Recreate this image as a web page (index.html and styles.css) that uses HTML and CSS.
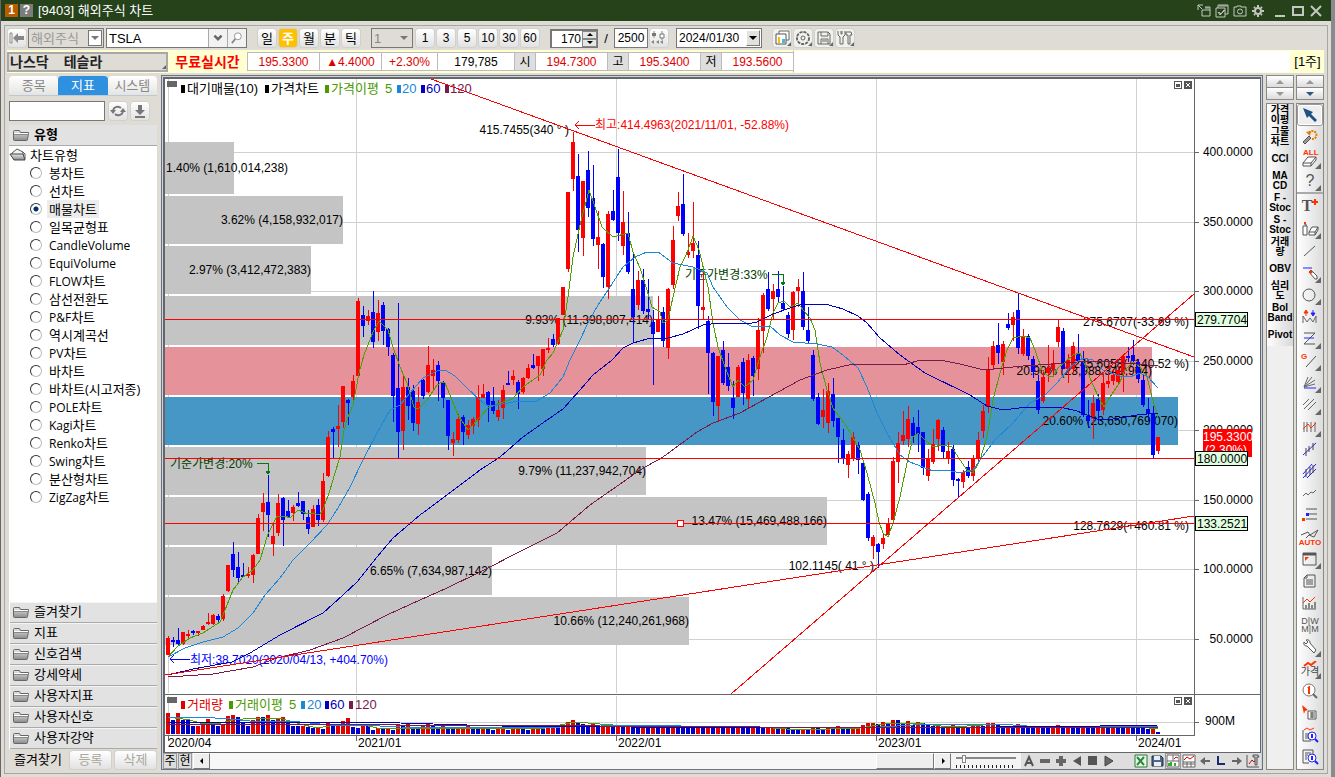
FILE: index.html
```html
<!DOCTYPE html>
<html lang="ko">
<head>
<meta charset="utf-8">
<title>[9403] 해외주식 차트</title>
<link rel="stylesheet" href="styles.css">
</head>
<body>
<svg class="defs" aria-hidden="true">
  <defs>
    <linearGradient id="metal" x1="0" y1="0" x2="0" y2="1"><stop offset="0" stop-color="#e8e8e8"/><stop offset="1" stop-color="#8a8a8a"/></linearGradient>
    <symbol id="folder" viewBox="0 0 18 14"><path d="M1.500 3.500v8q0 1 1 1h12q1 0 1-1l1-7h-8l-1-2h-5q-1 0-1 1z" fill="url(#metal)" stroke="#666"/><path d="M2 5.500h14" stroke="#fff"/><path d="M2 6.500h14" stroke="#888"/></symbol>
    <symbol id="folder-open" viewBox="0 0 18 14"><path d="M3 5l5-4 6 3v3H3z" fill="#f4f4f4" stroke="#555"/><path d="M1 6h13l2 6H5z" fill="url(#metal)" stroke="#444"/><path d="M14 4l2 2v5" fill="none" stroke="#555"/></symbol>
    <symbol id="up" viewBox="0 0 8 4"><path d="M0 4L4 0l4 4z"/></symbol>
    <symbol id="down" viewBox="0 0 8 4"><path d="M0 0h8L4 4z"/></symbol>
  </defs>
</svg>
<div class="window">
  <header class="titlebar">
    <span class="badge orange">1</span><button class="badge grey">?</button>
    <h1>[9403] 해외주식 차트</h1>
    <div class="win-tools">
      <button aria-label="분리"><svg viewBox="0 0 14 14"><path d="M1 6V1h5M1 1l4 4M5 6v6h8V3H8M5 6h8M9 3v2M11 3v2"/></svg></button>
      <button aria-label="복사"><svg viewBox="0 0 14 14"><path d="M1 4h9v9H1zM3 4V1h10v9h-3M3 8l2 3 5-5M4 8l2 2 3-4M4 2h8"/></svg></button>
      <button aria-label="캡처"><svg viewBox="0 0 14 14"><path d="M1 3h3V2h4v1h5v9H1zM7 5a2 2 0 1 1 0 5a2 2 0 1 1 0-5z"/></svg></button>
      <button aria-label="설정"><svg viewBox="0 0 14 14"><circle cx="7" cy="7" r="3" stroke-width="2"/><path d="M7 1v2M7 11v2M1 7h2M11 7h2M3 3l1 1M11 3l-1 1M3 11l1-1M11 11l-1-1" stroke-width="2"/></svg></button>
    </div>
    <div class="win-ctrl">
      <button aria-label="최소화"><svg viewBox="0 0 14 14"><path d="M2 12h10" stroke-width="2"/></svg></button>
      <button aria-label="최대화"><svg viewBox="0 0 14 14"><path d="M2 3h10v8H2z" stroke-width="2"/></svg></button>
      <button aria-label="닫기"><svg viewBox="0 0 14 14"><path d="M2 2l10 10M12 2L2 12" stroke-width="2"/></svg></button>
    </div>
  </header>

  <div class="frame">
    <div class="toolbar">
      <button class="btn back" aria-label="이전"><svg viewBox="0 0 18 18"><path d="M2 4h2v10H2z" fill="#fff" stroke="#888"/><path d="M5 9l5-5v3h6v4h-6v3z" fill="#888"/></svg></button>
      <span class="combo market"><select disabled aria-label="시장"><option>해외주식</option></select><i class="arrow boxed"><svg><use href="#down"/></svg></i></span>
      <span class="symbol"><input type="text" value="TSLA" aria-label="종목"><button aria-label="목록"><svg viewBox="0 0 10 10"><path d="M2 3l3 3 3-3" fill="none" stroke="#666" stroke-width="2"/></svg></button><button aria-label="검색"><svg viewBox="0 0 14 14"><circle cx="8" cy="5" r="4" fill="#fff" stroke="#888"/><path d="M5 8l-4 5" stroke="#888" stroke-width="2"/></svg></button></span>
      <div class="group period"><button class="btn">일</button><button class="btn on">주</button><button class="btn">월</button><button class="btn">분</button><button class="btn">틱</button></div>
      <span class="combo unit"><select disabled aria-label="단위"><option>1</option></select><i class="arrow"><svg><use href="#down"/></svg></i></span>
      <div class="group mins"><button class="btn">1</button><button class="btn">3</button><button class="btn">5</button><button class="btn">10</button><button class="btn">30</button><button class="btn">60</button></div>
      <span class="spin"><input type="text" value="170" aria-label="표시 개수"><span><button aria-label="증가"><svg><use href="#up"/></svg></button><button aria-label="감소"><svg><use href="#down"/></svg></button></span></span>
      <span class="slash">/</span>
      <input class="total" type="text" value="2500" aria-label="전체 개수">
      <button class="btn candle-btn" aria-label="연속조회"><svg viewBox="0 0 18 18"><path d="M4 2v7M12 2v9" stroke="#888"/><path d="M2 4h4v3H2z" fill="#777"/><path d="M10 5h4v4h-4z" fill="#fff" stroke="#777"/><path d="M4 11l-3 2 3 2zM9 11l-3 2 3 2zM13 11l-3 2 3 2" fill="#888"/></svg></button>
      <span class="combo date"><select aria-label="날짜"><option>2024/01/30</option></select><i class="arrow raised"><svg><use href="#down"/></svg></i></span>
      <div class="group tools">
        <button class="btn more" aria-label="차트"><svg viewBox="0 0 18 18"><path d="M6 5V2h10v9h-3" fill="#fff" stroke="#666"/><path d="M3 5h10v10H3z" fill="#fff" stroke="#555"/><path d="M5 8h2v6H5z" fill="#fb0"/><path d="M9 10h3v4H9z" fill="#4bd"/></svg></button>
        <button class="btn more" aria-label="환경설정"><svg viewBox="0 0 18 18"><circle cx="9" cy="9" r="6" fill="none" stroke="#666" stroke-width="2" stroke-dasharray="3 1"/><circle cx="9" cy="9" r="5" fill="#f0f0ed"/><circle cx="9" cy="9" r="2" fill="none" stroke="#666"/></svg></button>
        <button class="btn more" aria-label="저장"><svg viewBox="0 0 18 18"><path d="M3 3h10l2 2v10H3zM6 3v4h7V3M6 15v-5h7v5M7 12h5" fill="none" stroke="#666"/></svg></button>
        <button class="btn more" aria-label="도구"><svg viewBox="0 0 18 18"><path d="M2 2v4l2 2v7h3V8l2-2V2M5 2v3h1V2M10 3h5l1 3h-2v9h-2V6h-2z" fill="none" stroke="#666"/></svg></button>
      </div>
    </div>

    <div class="quote">
      <button class="name more"><span>나스닥</span><span>테슬라</span></button>
      <strong class="free">무료실시간</strong>
      <span class="cell c1">195.3300</span><span class="cell c2">▲4.4000</span><span class="cell c3">+2.30%</span><span class="cell c4">179,785</span>
      <span class="cell k">시</span><span class="cell c5">194.7300</span><span class="cell k">고</span><span class="cell c5">195.3400</span><span class="cell k">저</span><span class="cell c5">193.5600</span>
      <span class="fill"></span><span class="week">[1주]</span>
    </div>

    <div class="work">
      <aside class="side">
        <nav class="tabs"><button>종목</button><button class="on">지표</button><button>시스템</button></nav>
        <div class="find"><input type="text" aria-label="지표 검색"><button class="btn" aria-label="새로고침"><svg viewBox="0 0 18 18"><path d="M4 8a5 5 0 0 1 8-2M14 10a5 5 0 0 1-8 2" fill="none" stroke="#777" stroke-width="2"/><path d="M1 8h6l-3 4zM11 10h6l-3-4z" fill="#777"/></svg></button><button class="btn" aria-label="내려받기"><svg viewBox="0 0 18 18"><path d="M7 3h4v5h3l-5 5-5-5h3z" fill="#777"/><path d="M4 15h10" stroke="#777" stroke-width="2"/></svg></button></div>
        <h2 class="head"><svg><use href="#folder"/></svg>유형</h2>
        <div class="tree">
          <p><svg><use href="#folder-open"/></svg>차트유형</p>
          <label><input type="radio" name="t"><span>봉차트</span></label>
          <label><input type="radio" name="t"><span>선차트</span></label>
          <label><input type="radio" name="t" checked><span>매물차트</span></label>
          <label><input type="radio" name="t"><span>일목균형표</span></label>
          <label><input type="radio" name="t"><span><b>CandleVolume</b></span></label>
          <label><input type="radio" name="t"><span><b>EquiVolume</b></span></label>
          <label><input type="radio" name="t"><span><b>FLOW</b>차트</span></label>
          <label><input type="radio" name="t"><span>삼선전환도</span></label>
          <label><input type="radio" name="t"><span><b>P&amp;F</b>차트</span></label>
          <label><input type="radio" name="t"><span>역시계곡선</span></label>
          <label><input type="radio" name="t"><span><b>PV</b>차트</span></label>
          <label><input type="radio" name="t"><span>바차트</span></label>
          <label><input type="radio" name="t"><span>바차트(시고저종)</span></label>
          <label><input type="radio" name="t"><span><b>POLE</b>차트</span></label>
          <label><input type="radio" name="t"><span><b>Kagi</b>차트</span></label>
          <label><input type="radio" name="t"><span><b>Renko</b>차트</span></label>
          <label><input type="radio" name="t"><span><b>Swing</b>차트</span></label>
          <label><input type="radio" name="t"><span>분산형차트</span></label>
          <label><input type="radio" name="t"><span><b>ZigZag</b>차트</span></label>
        </div>
        <div class="acc">
          <button><svg><use href="#folder"/></svg>즐겨찾기</button>
          <button><svg><use href="#folder"/></svg>지표</button>
          <button><svg><use href="#folder"/></svg>신호검색</button>
          <button><svg><use href="#folder"/></svg>강세약세</button>
          <button><svg><use href="#folder"/></svg>사용자지표</button>
          <button><svg><use href="#folder"/></svg>사용자신호</button>
          <button><svg><use href="#folder"/></svg>사용자강약</button>
        </div>
        <div class="fav"><span>즐겨찾기</span><button class="btn" disabled>등록</button><button class="btn" disabled>삭제</button></div>
      </aside>

      <main class="chart">
        <div class="canvas">
          <svg id="plot" viewBox="165 79 1095 673" preserveAspectRatio="xMinYMin meet">
            <g id="grid" class="grid"></g>
            <g class="profile">
              <path d="M165 142h69v52h-69zM165 196h178v48H165zM165 246h146v48H165zM165 296h488v49H165zM165 447h481v48H165zM165 497h662v48H165zM165 547h327v48H165zM165 597h524v48H165z" fill="#c4c4c4"/>
              <path d="M165 347h987v48H165z" fill="#e5929a"/>
              <path d="M165 397h1013v48H165z" fill="#4697c5"/>
            </g>
            <g class="num">
              <text x="166" y="172">1.40% (1,610,014,238)</text>
              <g text-anchor="end">
                <text x="343" y="224">3.62% (4,158,932,017)</text>
                <text x="311" y="274">2.97% (3,412,472,383)</text>
                <text x="653" y="324">9.93% (11,398,807,414)</text>
                <text x="1152" y="375">20.90% (23,988,349,904)</text>
                <text x="1178" y="425">20.60% (23,650,769,070)</text>
                <text x="646" y="475">9.79% (11,237,942,704)</text>
                <text x="827" y="525">13.47% (15,469,488,166)</text>
                <text x="492" y="575">6.65% (7,634,987,142)</text>
                <text x="689" y="625">10.66% (12,240,261,968)</text>
                <text x="1189" y="326">275.6707(-33.69 %)</text>
                <text x="1189" y="368">245.6058(+140.52 %)</text>
                <text x="1189" y="530">128.7629(+460.81 %)</text>
                <text x="569" y="134">415.7455(340 ° )</text>
                <text x="874" y="570">102.1145( 41 ° )</text>
              </g>
              <g fill="#004000"><text x="170" y="468">기준가변경:20%</text><text x="685" y="279">기준가변경:33%</text></g>
              <text x="595" y="129" fill="#f00">최고:414.4963(2021/11/01, -52.88%)</text>
              <text x="190" y="664" fill="#00f">최저:38.7020(2020/04/13, +404.70%)</text>
            </g>
            <g id="candles" class="crisp"></g>
            <g fill="none" class="crisp">
              <path d="M257 463h11v8M266 471l2 3 2-3zM772 274h11v8M781 282l2 3 2-3z" stroke="#007a10"/>
              <path d="M595 125h-20M579 121l-4 4 4 4" stroke="#f00"/>
              <path d="M190 659h-20M174 655l-4 4 4 4" stroke="#00f"/>
            </g>
            <g id="averages" class="lines crisp"></g>
            <g stroke="#f00" class="crisp">
              <path d="M165 319h1029v1H165zM165 458h1029v1H165zM165 523h1029v1H165z" stroke="none" fill="#f00"/>
              <path d="M431 79L1194 357M1194 294L731 694M165 675L1194 516" fill="none"/>
              <path d="M677 520h6v6h-6z" fill="#fff"/>
            </g>
            <g id="volume" class="crisp"></g>
            <g id="volavg" class="lines crisp"></g>
            <g class="crisp">
              <path d="M165 694h1095v1H165zM1194 79h1v657h-1zM165 735h1030v1H165z" fill="#666"/>
              <path d="M167 81h10v6h-10zM167 697h10v6h-10z" fill="#666"/>
              <path id="ticks" fill="none" stroke="#666"/>
              <g fill="#fff" stroke="#555"><path d="M1174 81h7v7h-7zM1174 697h7v7h-7z"/><path d="M1184 81h7v7h-7zM1184 697h7v7h-7z" fill="#555"/></g>
              <path d="M1176 84h4v3h-4zM1176 700h4v3h-4z" fill="#555"/>
              <path d="M1186 83l4 4M1190 83l-4 4M1186 699l4 4M1190 699l-4 4" stroke="#fff"/>
            </g>
            <g class="legend">
              <text x="187" y="93">대기매물(10)</text><text x="271" y="93">가격차트</text>
              <text x="331" y="93" fill="#4a9a00">가격이평</text><text x="385" y="93" fill="#4a9a00">5</text>
              <text x="402" y="93" fill="#1b87d8">20</text><text x="426" y="93" fill="#0000c0">60</text><text x="450" y="93" fill="#7a1a4a">120</text>
              <text x="187" y="709" fill="#e00000">거래량</text><text x="235" y="709" fill="#4a9a00">거래이평</text><text x="289" y="709" fill="#4a9a00">5</text>
              <text x="307" y="709" fill="#1b87d8">20</text><text x="330" y="709" fill="#0000c0">60</text><text x="355" y="709" fill="#7a1a4a">120</text>
            </g>
            <g class="crisp">
              <path d="M181 85h4v8h-4zM265 85h4v8h-4z"/><path d="M325 85h4v8h-4zM229 701h4v8h-4z" fill="#4a9a00"/>
              <path d="M397 85h4v8h-4zM301 701h4v8h-4z" fill="#1b87d8"/><path d="M421 85h4v8h-4zM325 701h4v8h-4z" fill="#0000c0"/>
              <path d="M445 85h4v8h-4zM349 701h4v8h-4z" fill="#7a1a4a"/><path d="M181 701h4v8h-4z" fill="#e00000"/>
            </g>
            <g class="num" id="scale"></g>
            <g class="num">
              <text x="1205" y="725">900M</text>
              <text x="168" y="747">2020/04</text><text x="358" y="747">2021/01</text><text x="618" y="747">2022/01</text><text x="878" y="747">2023/01</text><text x="1138" y="747">2024/01</text>
              <path d="M1203 429h49v28h-49z" fill="#f00"/><text x="1203" y="441" fill="#fff">195.3300</text><text x="1205" y="454" fill="#fff">(2.30%)</text>
              <g class="tags crisp"><path d="M1195 312h52v14h-52zM1195 451h52v14h-52zM1195 516h52v14h-52z"/></g>
              <text x="1197" y="324">279.7704</text><text x="1197" y="463">180.0000</text><text x="1197" y="528">133.2521</text>
            </g>
          </svg>
        </div>
        <div class="bottom">
          <button class="flat">주</button><button class="flat">현</button>
          <button class="raise" aria-label="왼쪽"><svg viewBox="0 0 8 8"><path d="M5 1v6L2 4z"/></svg></button><div class="track"><span class="raise thumb"></span></div><button class="raise" aria-label="오른쪽"><svg viewBox="0 0 8 8"><path d="M3 1v6l3-3z"/></svg></button>
          <input type="range" min="0" max="100" value="10" aria-label="확대">
          <div class="icons">
            <button aria-label="A"><svg viewBox="0 0 16 16"><path d="M4 13l4-9 4 9M6 10h4" fill="none" stroke="#555" stroke-width="2"/></svg></button>
            <button aria-label="축소"><svg viewBox="0 0 16 16"><path d="M3 6h10v4H3z" fill="#666"/></svg></button>
            <button aria-label="확대"><svg viewBox="0 0 16 16"><path d="M6 3h4v3h3v4h-3v3H6v-3H3V6h3z" fill="#666"/></svg></button>
            <button aria-label="앞으로"><svg viewBox="0 0 16 16"><path d="M12 3v10L4 8z" fill="#555"/></svg></button>
            <button aria-label="정지"><svg viewBox="0 0 16 16"><path d="M3 3h9v9H3z" fill="#555"/></svg></button>
            <button aria-label="재생"><svg viewBox="0 0 16 16"><path d="M4 3v10l8-5z" fill="#666" stroke="#444"/></svg></button>
          </div>
          <div class="icons end">
            <button aria-label="엑셀"><svg viewBox="0 0 16 16"><path d="M2 2h12v12H2z" fill="#e8f5e8" stroke="#287a35"/><path d="M4 4l7 8M11 4l-7 8" stroke="#2a8a3c" stroke-width="2"/></svg></button>
            <button aria-label="저장"><svg viewBox="0 0 16 16"><path d="M3 3h9l2 2v8H3z" fill="#4b6590" stroke="#233"/><path d="M5 3h6v4H5zM5 9h7v4H5z" fill="#e8eef5"/></svg></button>
            <button class="pressed" aria-label="차트 보기"><svg viewBox="0 0 16 16"><path d="M2 2h12v12H2zM8 2v6M2 8h12" fill="#fff" stroke="#666"/><path d="M9 6l2-2 2 1" stroke="#d00" fill="none"/><path d="M4 13v-3M6 13V9M10 13v-3" stroke="#3a3" stroke-width="2"/></svg></button>
            <button aria-label="표 보기"><svg viewBox="0 0 16 16"><path d="M2 2h12v12H2zM2 9h12M2 11h12M6 9v5M10 9v5" fill="#fff" stroke="#666"/><path d="M3 7l3-3 3 2 4-3" stroke="#d00" fill="none"/></svg></button>
            <button aria-label="이전"><svg viewBox="0 0 16 16"><path d="M3 8l5-4v3h5v2H8v3z" fill="#666"/></svg></button>
            <button aria-label="L"><svg viewBox="0 0 16 16"><path d="M5 3v8h7" fill="none" stroke="#1a2a6a" stroke-width="2"/></svg></button>
            <button aria-label="다음"><svg viewBox="0 0 16 16"><path d="M13 8L8 4v3H3v2h5v3z" fill="#666"/></svg></button>
            <button aria-label="도구"><svg viewBox="0 0 16 16"><path d="M2 2v12h12" stroke="#555" fill="none"/><path d="M4 11l3-4 2 2 3-4" stroke="#d00" fill="none"/><path d="M8 2h5l1 2h-2v8h-2V4H8z" fill="#b8c8d0" stroke="#555"/></svg></button>
          </div>
        </div>
      </main>

      <div class="rail">
        <div class="updown"><button aria-label="위"><svg><use href="#up"/></svg></button><button aria-label="아래"><svg><use href="#down"/></svg></button></div>
        <div class="names">
          <button>가격<br>이평</button><button>그물<br>차트</button><button>CCI</button><button>MA<br>CD</button><button>F -<br>Stoc</button><button>S -<br>Stoc</button><button>거래<br>량</button><button>OBV</button><button>심리<br>도</button><button>Bol<br>Band</button><button>Pivot</button>
        </div>
      </div>
      <div class="rail">
        <div class="updown"><button aria-label="위"><svg><use href="#up"/></svg></button><button class="live" aria-label="아래"><svg><use href="#down"/></svg></button></div>
        <div class="draw">
          <button class="sel" aria-label="선택"><svg viewBox="0 0 20 20"><path d="M3 3l10 4-2 2 6 6-2 2-6-6-2 2z" fill="#1d4f80"/></svg></button>
          <button aria-label="되돌리기"><svg viewBox="0 0 20 20"><path d="M9 6a4 4 0 1 1 3 6" fill="none" stroke="#e87800" stroke-width="2" stroke-dasharray="2 1"/><path d="M6 5l5-1-1 5z" fill="#e87800"/><path d="M3 15l6-6 2 2-6 6z" fill="#999" stroke="#555"/></svg></button>
          <button class="more" aria-label="전체삭제"><svg viewBox="0 0 20 20"><text x="3" y="6" class="red tiny">ALL</text><path d="M3 14l5-6h8l-5 6zM3 14v3h8v-3M11 17l5-6V8" fill="#fff" stroke="#555"/></svg></button>
          <button class="more q" aria-label="도움말">?</button>
          <button class="text" aria-label="문자">T<svg viewBox="0 0 6 6"><path d="M3 0v6M0 3h6" stroke="#f30" stroke-width="2"/></svg></button>
          <button class="more" aria-label="지우개"><svg viewBox="0 0 20 20"><path d="M3 7h4v9H3zM4 5h2v2" fill="#fff" stroke="#555"/><path d="M4 3h2v2H4z" fill="#f30"/><path d="M9 13l3-5h6l-3 5zM9 13v3h6v-3M15 16l3-5V8" fill="#fff" stroke="#555"/></svg></button>
          <button aria-label="추세선"><svg viewBox="0 0 20 20"><path d="M4 15L15 5" stroke="#555"/></svg></button>
          <button class="more" aria-label="수평선"><svg viewBox="0 0 20 20"><path d="M3 5h9" stroke="#22f"/><path d="M9 9l2-2 6 6v3h-2z" fill="#fff" stroke="#555"/><path d="M9 9l2-2 2 2-2 2z" fill="#f30"/></svg></button>
          <button class="more" aria-label="원"><svg viewBox="0 0 20 20"><circle cx="9" cy="10" r="6" fill="none" stroke="#555"/></svg></button>
          <button aria-label="파동"><svg viewBox="0 0 20 20"><path d="M3 16V9l4 6 3-4 3 4 3-6v7" fill="none" stroke="#666"/><path d="M6 9V5M4 6l2-3 2 3z" stroke="#f30" fill="#f30"/><path d="M13 3v4M11 6l2 3 2-3z" stroke="#22f" fill="#22f"/></svg></button>
          <button class="more" aria-label="피보나치"><svg viewBox="0 0 20 20"><path d="M4 4h11L4 15h11" fill="none" stroke="#555"/><path d="M4 9h10" stroke="#22f"/></svg></button>
          <button class="more" aria-label="갠"><svg viewBox="0 0 20 20"><text x="1" y="8" class="red tiny">G</text><path d="M6 16L16 5" stroke="#555"/></svg></button>
          <button class="more" aria-label="팬"><svg viewBox="0 0 20 20"><path d="M4 14L8 4M4 14L12 4M4 14l11-7M4 14l11-3" stroke="#666"/><path d="M4 15h12" stroke="#22f"/></svg></button>
          <button class="more" aria-label="평행선"><svg viewBox="0 0 20 20"><path d="M3 10l6-6M4 14L14 4M8 15l8-8" stroke="#666"/></svg></button>
          <button class="more" aria-label="주기선"><svg viewBox="0 0 20 20"><path d="M4 5v10M7 5v10M11 5v10M15 5v10" stroke="#666"/><path d="M3 12l5-5 3 4 5-5" fill="none" stroke="#f30"/></svg></button>
          <button aria-label="채널"><svg viewBox="0 0 20 20"><path d="M3 16L16 4" stroke="#22f"/><path d="M6 9v8M9 7v6M13 4v7" stroke="#444"/></svg></button>
          <button aria-label="회귀채널"><svg viewBox="0 0 20 20"><path d="M3 13L12 3M3 17L16 3M7 17l9-9" stroke="#22f"/><path d="M6 8v8M10 6v8M13 4v8" stroke="#444"/></svg></button>
          <button aria-label="지그재그"><svg viewBox="0 0 20 20"><path d="M3 13l3-3 2 2 3-3 2 1 3-3" fill="none" stroke="#666"/></svg></button>
          <button aria-label="수평분할"><svg viewBox="0 0 20 20"><path d="M6 4h11M6 9h11M6 14h11" stroke="#555"/><path d="M2 13h3v3H2z" fill="#f30"/><path d="M6 8h3v3H6z" fill="#22f"/></svg></button>
          <button class="auto" aria-label="자동추세"><svg viewBox="0 0 20 10"><path d="M1 7l7-3 2 3 8-5-4 7-5-2-3 3" fill="none" stroke="#555"/></svg>AUTO</button>
          <button class="more" aria-label="창"><svg viewBox="0 0 20 20"><path d="M3 4h13v12H3zM3 6h13" fill="none" stroke="#555"/><path d="M3 5h13" stroke="#555" stroke-width="2"/><path d="M5 8h4l-4 4z" fill="#f30"/></svg></button>
          <button aria-label="문서"><svg viewBox="0 0 20 20"><path d="M7 4h8v12H4V7zM7 4v3H4M6 9h7M6 11h7M6 13h7" fill="none" stroke="#555"/></svg></button>
          <button aria-label="통계"><svg viewBox="0 0 20 20"><path d="M3 4v12h13" fill="none" stroke="#666"/><path d="M6 16v-4M9 16v-6M12 16v-4M15 16V9" stroke="#888" stroke-width="2"/><path d="M3 10l4-4 3 3 5-5" fill="none" stroke="#f30"/></svg></button>
          <button class="dwmm" aria-label="일주월분">D|W<br>M|M</button>
          <button class="more" aria-label="설정"><svg viewBox="0 0 20 20"><path d="M4 5l2 2 2-2-2-2q4-1 4 3l6 7-2 3-7-7q-4 0-3-4z" fill="#fff" stroke="#555"/></svg></button>
          <button class="more price" aria-label="가격"><svg viewBox="0 0 14 6"><path d="M1 5l4-3 3 2 5-4" fill="none" stroke="#f30" stroke-width="2"/></svg>가격</button>
          <button aria-label="확대경"><svg viewBox="0 0 20 20"><circle cx="9" cy="9" r="6" fill="#fff" stroke="#777"/><path d="M13 13l4 4" stroke="#666" stroke-width="2"/><path d="M7 7l2-2h1v8H8V7z" fill="#f30"/></svg></button>
          <button aria-label="데이터"><svg viewBox="0 0 20 20"><path d="M2 2l6 5-3 1-1 3z" fill="#f30"/><path d="M8 8h8v8H8zM10 10h5M10 12h5M10 14h5M12 9v6" fill="#fff" stroke="#555"/></svg></button>
          <button aria-label="차트검색"><svg viewBox="0 0 20 20"><path d="M3 5v11h8M5 9h4M5 11h3M5 13h4" fill="none" stroke="#555"/><path d="M4 5l3-2 3 2 4-2" fill="none" stroke="#f30"/><circle cx="12" cy="11" r="4" fill="#fff" stroke="#22f"/><path d="M12 9v4M15 14l3 3" stroke="#22f" stroke-width="2"/></svg></button>
          <button aria-label="문서검색"><svg viewBox="0 0 20 20"><path d="M9 16H3V3h10v4M5 6h6M5 8h3M5 10h2M5 12h2" fill="none" stroke="#555"/><circle cx="12" cy="11" r="4" fill="#fff" stroke="#22f"/><path d="M12 9v4M15 14l3 3" stroke="#22f" stroke-width="2"/></svg></button>
        </div>
      </div>
    </div>
  </div>
</div>
<script src="chart.js"></script>
</body>
</html>
```
FILE: styles.css
```css
* { box-sizing: border-box; }
body { margin: 0; font: 13px "Liberation Sans", "Noto Sans CJK KR", sans-serif; color: #000; }
button, input, select { font: inherit; color: inherit; margin: 0; padding: 0; border: 0; background: none; min-width: 0; }
button { display: flex; align-items: center; justify-content: center; line-height: 1; white-space: nowrap; }
svg { display: block; }
.defs { position: absolute; width: 0; height: 0; }

.window { height: 100vh; display: flex; flex-direction: column; background: #dedcd5; border-left: 1px solid #666; border-right: 4px solid #858b8f; }
.titlebar { height: 21px; flex: none; background: #25421a; color: #fff; display: flex; align-items: center; gap: 2px; padding: 0 8px 0 4px; }
.titlebar h1 { font-size: 13px; font-weight: 400; margin: 0 auto 0 3px; line-height: 20px; }
.badge { width: 13px; height: 13px; font-size: 12px; line-height: 13px; font-weight: 700; text-align: center; color: #fff; }
.orange { background: #b85c00; }
.grey { background: #7c7c7c; }
.win-tools, .win-ctrl { display: flex; gap: 4px; margin-left: 6px; }
.titlebar svg { width: 14px; height: 14px; fill: none; stroke: #c4c8c0; }

.frame { flex: 1; min-height: 0; margin: 4px 3px 3px; border: 1px solid #a6a6a6; padding: 0 3px 3px 2px; display: flex; flex-direction: column; }
.toolbar { height: 24px; flex: none; display: flex; align-items: center; padding: 0 2px 0 1px; }
.btn { height: 18px; background: linear-gradient(#fff, #f0f0f0 50%, #e2e2e2); border-radius: 3px; box-shadow: 0 0 0 1px #d0d0cc; position: relative; }
.btn svg { width: 18px; height: 18px; }
.btn.on { background: #ffc000; color: #fff; font-weight: 700; }
.back { width: 18px; margin-right: 2px; }
.combo { position: relative; height: 20px; border: 1px solid #777; }
.combo select { appearance: none; width: 100%; height: 100%; padding-left: 2px; opacity: 1; }
.combo .arrow { position: absolute; right: 1px; top: 1px; bottom: 1px; width: 14px; display: flex; align-items: center; justify-content: center; pointer-events: none; }
.arrow svg { width: 8px; height: 4px; fill: #777; }
.boxed { background: #fff; border: 1px solid #777; }
.raised { background: #e2e2dd; border: 1px solid #999; border-color: #fff #777 #777 #fff; }
.raised svg { fill: #000; }
.market { width: 76px; color: #999; }
.symbol { display: flex; width: 141px; height: 20px; margin-left: 2px; border: 1px solid #777; background: #fff; }
.symbol input { flex: 1; padding-left: 2px; }
.symbol button { width: 19px; border-left: 1px solid #aaa; background: #f2f2f2; }
.symbol svg { width: 12px; height: 12px; }
.group { display: flex; gap: 3px; }
.group .btn { width: 18px; }
.period { margin-left: 11px; }
.unit { width: 42px; margin: 0 3px 0 11px; color: #888; }
.mins { font-size: 12px; }
.spin { display: flex; width: 48px; height: 19px; margin-left: 11px; border: 1px solid #777; border-width: 2px 1px 1px 2px; background: #fff; }
.spin input { flex: 1; text-align: right; font-size: 12px; padding-right: 1px; }
.spin span { width: 15px; display: flex; flex-direction: column; }
.spin button { flex: 1; background: #e6e6e2; border: 1px solid #888; }
.spin svg { width: 6px; height: 3px; }
.slash { width: 16px; text-align: center; }
.total { width: 34px; height: 20px; border: 1px solid #777; background: #fff; text-align: center; font-size: 12px; }
.candle-btn { width: 18px; margin-left: 2px; }
.date { width: 86px; margin: 0 11px 0 8px; background: #fff; font-size: 12px; }
.tools .btn { background: #f0f0ed; }
.more { position: relative; }
.more::after { content: ""; position: absolute; right: 0; bottom: 1px; border: 2px solid #666; border-top-color: transparent; border-left-color: transparent; }

.quote { height: 23px; flex: none; display: flex; align-items: center; background: #ffffd2; font-size: 12px; }
.name { width: 161px; height: 20px; border: 2px solid #a8a8a8; background: #dedcd5; justify-content: flex-start; gap: 15px; padding-left: 1px; font-size: 14px; font-weight: 700; color: #222; }
.free { width: 79px; text-align: center; color: #f00; font-size: 14px; line-height: 20px; }
.cell { height: 19px; line-height: 18px; text-align: center; background: #fff; border: 1px solid #bbb; border-right: 0; color: #d00; }
.c1 { width: 72px; } .c2 { width: 62px; } .c3 { width: 56px; } .c4 { width: 77px; color: #000; } .c5 { width: 72px; }
.k { width: 21px; background: #dedede; color: #000; }
.fill { flex: 1; align-self: stretch; background: #fff; border: 1px solid #ffffd2; border-left: 1px solid #bbb; }
.week { width: 33px; text-align: center; font-size: 13px; line-height: 20px; }

.work { flex: 1; min-height: 0; margin-top: 2px; display: flex; padding-left: 2px; }
.side { width: 148px; flex: none; margin-right: 4px; display: flex; flex-direction: column; }
.tabs { height: 20px; flex: none; display: flex; border-bottom: 1px solid #bcc8d4; margin-top: 1px; }
.tabs button { flex: 1; color: #888; background: linear-gradient(#fff, #e4e4e2); border-radius: 4px 4px 0 0; }
.tabs .on { background: #3090e0; color: #fff; }
.find { height: 29px; flex: none; display: flex; align-items: center; gap: 4px; padding-top: 1px; }
.find input { width: 96px; height: 20px; border: 1px solid #777; background: #fff; }
.find .btn { width: 18px; }
.head { height: 21px; flex: none; margin: 0; display: flex; align-items: center; font-size: 13px; font-weight: 700; background: #e2e2e2; border-bottom: 1px solid #aaa; padding-left: 3px; gap: 4px; line-height: 18px; }
.side p svg, .acc svg, .head svg { width: 18px; height: 14px; flex: none; }
.tree { flex: 1; background: #fff; min-height: 0; overflow: hidden; font-family: "Open Sans", "Noto Sans CJK KR", sans-serif; }
.tree p { margin: 0; height: 18px; display: flex; align-items: center; gap: 3px; line-height: 18px; }
.tree label { height: 18px; display: flex; align-items: center; gap: 5px; padding-left: 21px; line-height: 18px; white-space: nowrap; }
.tree label span { padding: 0 2px; }
.tree b { font-size: 12px; font-weight: 400; }
.tree input { appearance: none; width: 12px; height: 12px; border: 1px solid #333; border-right-color: #bbb; border-bottom-color: #bbb; border-radius: 50%; background: #fff; }
.tree input:checked { background: radial-gradient(circle, #003070 2px, #fff 3px); }
.tree input:checked + span { background: #ececec; }
.acc { flex: none; padding-left: 1px; background: #fff; }
.acc button { width: 100%; height: 21px; justify-content: flex-start; gap: 4px; padding: 0 2px 2px; background: #e2e2e2; border-bottom: 1px solid #aaa; border-top: 1px solid #f4f4f4; }
.fav { height: 21px; flex: none; display: flex; align-items: center; gap: 4px; padding-left: 5px; }
.fav span { width: 52px; line-height: 18px; }
.fav .btn { width: 41px; color: #aaa89c; }

.chart { flex: 1; min-width: 0; border: 1px solid #6a7385; padding: 1px 1px 0; background: #ccd2de; display: flex; flex-direction: column; }
.canvas { flex: 1; min-height: 0; background: #fff; border: 1px solid #666; border-width: 2px 1px 1px 2px; }
.canvas svg { width: 100%; height: 100%; }
.grid { stroke: #d0d0d0; shape-rendering: crispEdges; }
.crisp { shape-rendering: crispEdges; }
.num { font-size: 12px; }
.legend { font-size: 13px; }
.lines { fill: none; }
.tags { fill: #e0ffe0; stroke: #000; }

.bottom { height: 16px; flex: none; display: flex; background: #dedede; }
.flat { width: 14px; margin-right: 1px; background: #ddd; border: 1px solid #999; font-size: 12px; }
.raise { width: 17px; background: #eee; border: 1px solid #fff; border-right-color: #777; border-bottom-color: #777; }
.raise svg { width: 8px; height: 8px; }
.track { flex: 1; display: flex; justify-content: flex-end; background: #f7f7f7; }
.thumb { width: 58px; }
.bottom input { appearance: none; width: 70px; height: 16px; padding: 0 5px; background: repeating-linear-gradient(90deg, #222 0 1px, transparent 1px 4px) 5px 12px / 60px 3px no-repeat, #f4f4f4; }
.bottom input::-webkit-slider-runnable-track { height: 2px; background: #888; margin-bottom: 6px; }
.bottom input::-webkit-slider-thumb { appearance: none; width: 4px; height: 8px; margin-top: -2px; background: #fff; border: 1px solid #888; }
.icons { display: flex; }
.icons.end { margin-left: 16px; }
.icons svg { width: 16px; height: 16px; }
.icons button { width: 16px; }
.pressed { background: #eee; outline: 1px solid #999; outline-offset: -1px; }

.rail { width: 28px; flex: none; margin-left: 3px; display: flex; flex-direction: column; gap: 3px; }
.rail + .rail { margin-left: 2px; }
.updown { height: 25px; flex: none; border: 1px solid #888; display: flex; flex-direction: column; background: #888; gap: 1px; }
.updown button { flex: 1; background: linear-gradient(#fff, #dcdcdc); }
.updown svg { width: 8px; height: 4px; fill: #999; }
.updown .live svg { fill: #34557f; }
.names, .draw { flex: 1; min-height: 0; border: 1px solid #888; background: #efefef; overflow: hidden; }
.names button { width: 100%; height: 22px; font-size: 10px; line-height: 10px; font-weight: 700; background: linear-gradient(90deg, #fff, #d8d8d8); }
.draw { background: linear-gradient(90deg, #fff, #dcdcdc); }
.draw button { width: 100%; height: 22px; }
.draw svg { width: 20px; height: 20px; }
.draw .more::after { right: 2px; border-width: 3px; border-color: transparent #666 #666 transparent; }
.draw .sel { border: 1px solid #999; outline: 1px solid #fff; outline-offset: -2px; border-radius: 3px; background: #eee; }
.draw .q { font-size: 16px; color: #555; }
.draw .text { font: 700 16px/20px "Liberation Serif", serif; color: #555; border-top: 2px solid #aaa; height: 26px; }
.draw .text svg { width: 6px; height: 6px; margin-bottom: 8px; }
.red { fill: #f30; }
.tiny { font: 700 8px "Liberation Sans", sans-serif; }
.draw .dwmm { font-size: 9px; line-height: 8px; color: #555; }
.draw .price { flex-direction: column; font-size: 10px; color: #444; }
.draw .price svg { width: 14px; height: 6px; }
.draw .auto { flex-direction: column; font-size: 8px; font-weight: 700; line-height: 9px; color: #f30; }
.draw .auto svg { width: 20px; height: 10px; }
```
FILE: chart.js
```js
const NS = "http://www.w3.org/2000/svg";
const RISE = "#ff0000", FALL = "#0000ff";

// Weekly candles: direction, high, body top, body bottom, low
const weeks = `R636,638,655,655 B637,640,642,647 B628,640,644,646 R632,632,644,645 R630,634,636,638 B630,631,633,635 R631,631,632,636 R625,626,630,630 R613,622,624,625 R614,615,624,625
B614,616,620,622 R594,596,619,621 R565,565,591,592 B542,554,570,577 B552,567,578,583 B563,575,577,577 R567,574,575,578 R554,555,575,583 R514,518,554,554 R493,503,512,531
B475,502,515,537 R523,536,544,556 R494,503,533,536 B497,498,520,546 B500,511,517,518 R505,507,513,521 B492,503,506,507 B501,501,514,520 B510,517,529,534 R505,509,527,527
B499,505,520,526 R473,481,520,522 R431,437,476,477 B427,429,432,458 R405,426,429,447 R386,386,422,428 B399,400,403,425 R375,381,397,403 R298,301,376,377 B306,315,326,337
R310,316,321,325 B291,312,342,348 R300,313,332,341 B302,305,331,345 B328,329,347,356 B353,355,396,422 B303,388,432,458 R376,387,431,450 B378,387,406,420 B385,391,423,431
R387,402,424,435 B379,380,396,399 R346,365,392,393 R359,370,376,389 B361,365,381,401 B381,382,398,408 B400,400,436,450 R432,439,443,456 R414,419,440,443 B415,417,432,445
R420,425,435,439 R417,419,426,434 R385,397,420,427 R384,394,398,398 B391,392,405,422 B387,401,411,414 R400,410,417,421 R385,390,408,419 B371,383,385,385 R370,376,380,385
B380,382,394,409 R377,378,392,394 R364,368,378,379 B354,365,368,369 R356,356,366,381 R349,349,369,376 R338,348,350,353 B334,339,345,347 R318,318,344,345 R287,287,315,315
R192,192,269,272 R132,142,179,191 B154,176,230,252 R181,181,238,256 B151,170,208,217 B165,198,239,246 R211,237,245,269 B243,244,277,288 R211,214,287,299 B190,211,220,221
B149,177,233,241 R191,222,246,255 B212,233,272,274 B254,289,317,342 R271,280,305,310 B269,280,311,314 B279,309,312,319 B310,322,334,385 R296,320,332,332 B307,312,341,347
R288,289,348,359 R226,240,285,289 R192,206,216,221 B174,204,234,236 R233,252,255,258 R202,243,251,258 B241,255,306,329 R266,307,310,320 B316,321,353,394 B352,353,402,416
R356,356,406,422 B341,350,383,385 B353,367,386,391 B381,398,408,419 R365,367,397,397 B358,362,393,405 R354,360,399,409 B356,358,376,396 R318,330,369,380 R293,295,331,353
B272,289,309,311 R284,291,299,319 B271,289,297,303 B286,303,309,311 B312,315,334,338 R291,292,330,340 R279,287,291,307 B272,291,327,330 B307,330,341,344 B350,355,399,401
B393,397,424,425 R389,410,417,428 R383,391,423,433 B378,394,421,427 B418,418,437,463 B429,440,459,464 R451,454,465,478 R432,437,459,461 B442,445,460,474 B462,463,500,501
B492,494,538,541 R535,537,546,559 B543,544,552,568 R533,538,544,549 R518,523,535,537 R457,461,520,523 R432,443,462,483 R411,435,441,445 R406,419,439,447 B417,423,436,443
B410,427,434,452 B432,432,468,475 R449,458,476,481 R429,444,462,464 R419,420,439,451 B427,430,452,458 R442,451,459,464 B445,449,480,486 B478,479,481,497 R470,472,482,488
B461,467,476,478 R455,459,476,481 R432,440,459,462 R405,411,431,438 R357,369,407,413 R341,346,365,370 B323,345,353,364 R341,344,362,375 B313,324,328,330 R312,317,325,341
B293,310,348,354 R329,337,354,356 B334,336,356,360 B356,359,372,378 B375,381,410,414 R370,377,401,403 R345,368,373,382 R350,363,369,375 R320,327,342,347 B328,331,369,369
R354,360,369,383 R342,346,369,373 B334,353,361,362 B351,361,415,417 B400,416,421,428 R395,403,418,439 B394,399,411,423 R375,383,410,415 R372,381,384,388 R370,375,381,385
R366,370,382,383 R355,356,374,392 B347,356,358,362 B340,355,361,365 B359,362,379,383 B375,380,405,407 B398,409,414,421 B406,413,455,458 R437,437,451,454`.split(/\s+/);

const volumes = [21,14,21,14,14,8,8,10,15,12,8,10,18,19,17,11,8,14,17,17,19,14,15,17,11,8,8,8,7,6,7,5,11,8,9,13,16,7,6,10,9,4,6,5,6,4,9,9,11,7,
  7,8,11,9,7,8,6,5,6,7,8,6,5,6,5,4,5,6,4,5,6,5,4,5,6,5,6,7,6,9,12,14,12,10,9,11,8,9,10,7,9,8,9,8,7,8,6,7,6,7,
  6,9,8,7,7,6,7,6,8,7,8,6,7,6,7,7,6,7,7,6,6,7,5,6,6,5,4,5,5,6,6,5,6,5,8,6,6,7,7,9,11,11,10,12,
  10,14,14,11,13,9,12,11,9,8,9,8,8,9,8,8,7,8,9,8,11,11,9,8,8,7,10,8,7,7,7,7,7,7,9,7,7,7,7,7,7,7,7,9,7,7,7,7,7,7,7,6,5,6,2];

const averages = {
  "#4f9f00": "168,657 178,646 190,638 203,633 220,622 223,615 233,590 243,577 253,570 260,560 268,534 277,516 285,516 290,518 298,510 308,514 313,513 319,515 323,510 330,490 335,473 340,457 344,430 348,417 353,405 359,373 364,355 373,332 379,321 388,330 393,347 400,367 407,383 414,407 418,409 427,400 437,385 442,382 445,383 450,395 458,415 468,430 473,425 480,417 488,408 500,403 512,399 523,387 540,375 547,360 553,353 563,330 568,297 573,257 580,225 589,190 595,207 602,227 613,237 628,233 633,252 640,268 647,290 652,307 660,312 663,323 668,320 673,297 680,267 687,253 693,236 699,250 708,287 713,323 718,347 725,367 733,387 738,380 745,387 753,380 760,357 767,337 773,313 778,303 784,301 790,307 798,303 803,310 810,318 815,330 820,363 827,390 833,408 847,427 860,450 867,473 875,503 879,522 883,533 888,537 893,523 900,497 907,463 913,437 918,433 925,440 933,447 942,445 952,447 958,457 967,470 973,473 980,460 987,437 993,400 1000,373 1007,350 1013,338 1023,336 1030,338 1035,350 1042,370 1048,376 1053,377 1058,368 1065,362 1073,355 1080,353 1085,365 1092,383 1100,400 1104,407 1110,397 1120,382 1125,370 1133,362 1140,367 1147,377 1152,397 1158,417",
  "#1b87d8": "168,657 185,648 203,642 223,637 238,628 253,613 265,595 280,578 293,560 310,543 327,525 338,508 350,487 363,460 377,433 390,410 400,405 410,393 423,378 437,371 445,370 455,376 467,388 480,400 488,406 497,405 513,402 537,401 550,393 563,377 570,360 580,340 588,323 598,305 608,290 623,267 635,257 647,252 658,252 673,263 693,267 707,273 713,287 727,307 740,320 753,327 770,326 780,335 793,342 817,344 832,347 843,355 858,368 867,387 877,413 887,433 900,455 910,462 933,471 947,470 960,473 973,470 985,453 995,440 1013,423 1030,403 1045,395 1057,383 1070,367 1083,358 1093,360 1103,370 1120,376 1130,377 1140,373 1148,377 1158,388",
  "#0000b8": "168,675 193,669 232,662 250,653 280,635 323,613 343,595 357,582 377,557 393,538 420,515 447,495 480,470 500,457 523,437 547,420 563,409 580,390 593,375 612,360 623,348 633,343 647,339 668,338 683,334 703,325 720,323 747,324 757,322 773,314 793,307 803,304 825,304 843,309 858,316 867,323 880,338 900,355 925,373 970,395 987,406 1003,410 1027,407 1060,407 1077,411 1097,419 1113,419 1137,415 1158,413",
  "#7a1a4a": "168,677 213,674 253,667 277,658 310,650 343,638 387,615 420,600 447,588 480,572 492,566 513,555 557,533 590,505 623,482 640,470 663,457 697,432 713,423 740,413 767,398 800,380 827,370 853,364 879,364 903,365 917,361 940,360 960,364 980,369 993,369 1023,366 1053,364 1090,361 1113,362 1158,366"
};

const volumeAverages = {
  "#4f9f00": "168,717 190,720 200,723 217,724 233,720 253,718 283,719 300,724 317,728 343,724 360,724 377,728 400,728 450,728 540,729 575,722 600,724 640,727 760,727 800,730 860,728 890,723 915,723 950,727 1000,724 1040,727 1140,727 1158,729",
  "#1b87d8": "168,717 200,717 230,719 250,721 290,721 330,725 360,725 400,727 540,728 600,725 760,727 880,727 930,724 1000,724 1040,727 1158,726",
  "#0000b8": "168,722 400,723 500,726 760,728 900,727 1000,727 1100,726 1158,725",
  "#7a1a4a": "168,724 400,725 600,726 760,727 900,728 1158,727"
};

function add(parent, name, attrs, text) {
  const node = document.createElementNS(NS, name);
  for (const key in attrs) node.setAttribute(key, attrs[key]);
  if (text) node.textContent = text;
  document.getElementById(parent).append(node);
}

const rows = [152, 222, 291, 361, 430, 500, 569, 639];
const columns = [168, 356, 616, 876, 1136];
rows.forEach((y, i) => {
  add("grid", "path", { d: `M165 ${y}h1029` });
  const price = 400 - i * 50;
  add("scale", "text", { x: 1253, y: y + 4, "text-anchor": "end" }, price.toFixed(4));
});
add("grid", "path", { d: "M165 722h1029" });
columns.forEach(x => add("grid", "path", { d: `M${x} 79v614M${x} 696v39` }));
document.getElementById("ticks").setAttribute("d",
  [...rows, 722].map(y => `M1195 ${y}h4`).join("") + columns.map(x => `M${x} 736v5`).join(""));

weeks.forEach((week, i) => {
  const x = 168 + i * 5;
  const [high, top, bottom, low] = week.slice(1).split(",").map(Number);
  const fill = week[0] === "R" ? RISE : FALL;
  add("candles", "rect", { x, y: high, width: 1, height: Math.max(1, low - high), fill });
  add("candles", "rect", { x: x - 2, y: top, width: 4, height: Math.max(2, bottom - top), fill });
});

volumes.slice(0, weeks.length).forEach((h, i) => {
  const rising = i === 0 || h > volumes[i - 1] || (h === volumes[i - 1] && i % 3 === 0);
  add("volume", "rect", { x: 166 + i * 5, y: 734 - h, width: 4, height: h, fill: rising ? "#e00000" : "#0000c8" });
});

for (const color in averages) add("averages", "polyline", { points: averages[color], stroke: color });
for (const color in volumeAverages) add("volavg", "polyline", { points: volumeAverages[color], stroke: color });
```
